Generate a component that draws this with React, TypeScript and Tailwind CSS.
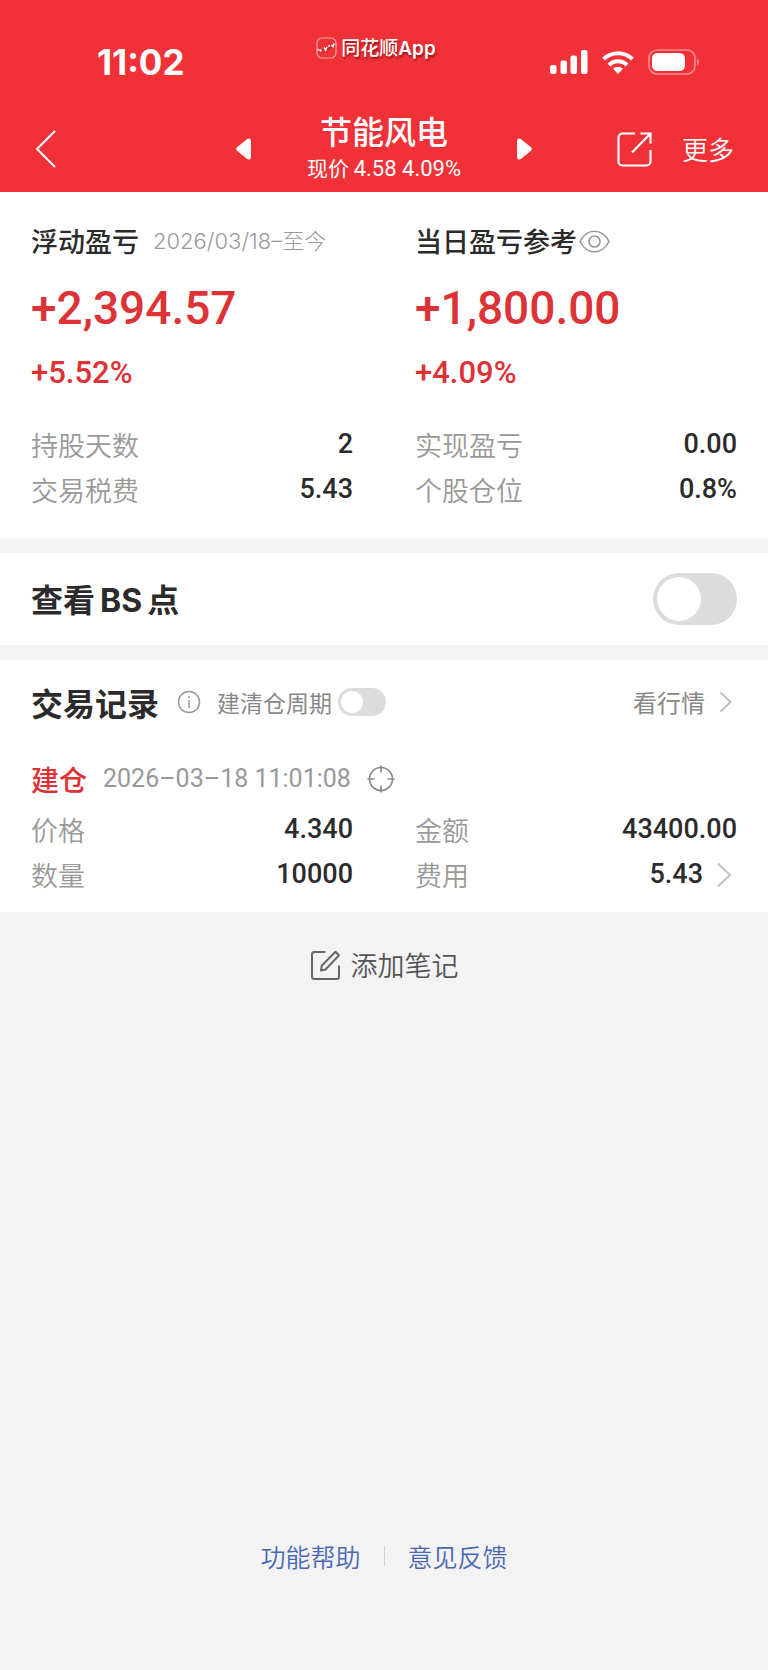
import { useState } from 'react';

const SUMMARY = [
  {
    title: '浮动盈亏',
    note: '2026/03/18–至今',
    amount: '+2,394.57',
    percent: '+5.52%',
    rows: [
      { label: '持股天数', value: '2' },
      { label: '交易税费', value: '5.43' },
    ],
  },
  {
    title: '当日盈亏参考',
    eye: true,
    amount: '+1,800.00',
    percent: '+4.09%',
    rows: [
      { label: '实现盈亏', value: '0.00' },
      { label: '个股仓位', value: '0.8%' },
    ],
  },
];

const TRADE = [
  { label: '价格', value: '4.340' },
  { label: '金额', value: '43400.00' },
  { label: '数量', value: '10000' },
  { label: '费用', value: '5.43', more: true },
];

function AppLogo() {
  return (
    <svg width="21" height="22" viewBox="0 0 21 22" fill="none" aria-hidden="true">
      <rect x="1" y="1" width="19" height="20" rx="5" stroke="#f8a59f" strokeWidth="1.2" />
      <path d="M2 14.500l4-1 3-2.500 3 1.500 3-3.500 4 0" stroke="#b3262a" strokeWidth="1.500" />
      <path d="M1.500 13h2M4 14.500l1.500-2M8 10.500l1.500 2.500 1.500-3M12.500 9.500l1.500-1M15.500 8l1.500 1.500 1-3" stroke="#fff" strokeWidth="1.600" />
    </svg>
  );
}

function StatusIcons() {
  return (
    <div className="flex items-center gap-[14px]">
      <svg width="38" height="24" viewBox="0 0 38 24" fill="#fff" aria-hidden="true">
        <rect x="0" y="15" width="6.500" height="9" rx="2" />
        <rect x="10.500" y="10.500" width="6.500" height="13.500" rx="2" />
        <rect x="20.500" y="5.500" width="6.500" height="18.500" rx="2" />
        <rect x="31" y="0" width="6.500" height="24" rx="2" />
      </svg>
      <svg width="32" height="24" viewBox="0 0 32 24" fill="none" stroke="#fff" strokeWidth="4" aria-hidden="true">
        <path d="M1.500 9.200a20.500 20.500 0 0 1 29 0" />
        <path d="M7 15a12.800 12.800 0 0 1 18 0" />
        <path d="M16 24l-5-5.200a7.200 7.200 0 0 1 10 0z" fill="#fff" stroke="none" />
      </svg>
      <svg width="52" height="26" viewBox="0 0 52 26" fill="none" aria-hidden="true">
        <rect x="1" y="1" width="46" height="24" rx="8" stroke="#f78a8b" strokeWidth="1.600" />
        <rect x="4" y="4" width="33" height="18" rx="5.500" fill="#fff" />
        <path d="M49 9.500c2.600 1 2.600 6 0 7z" fill="#f78a8b" />
      </svg>
    </div>
  );
}

function Chevron({ className }: { className: string }) {
  return (
    <svg viewBox="0 0 14 24" fill="none" className={className} aria-hidden="true">
      <path d="M1.500 1.500L12.500 12L1.500 22.500" stroke="currentColor" strokeWidth="2" />
    </svg>
  );
}

function Row({ label, value, more }: { label: string; value: string; more?: boolean }) {
  return (
    <div className="flex h-[45px] items-center justify-between">
      <dt className="text-[27px] leading-9 font-[350] text-[#999]">{label}</dt>
      <dd className="flex items-center font-[Roboto,sans-serif] text-[27px] font-medium text-[#2b2b2b]">
        {value}
        {more && (
          <button type="button" aria-label="费用明细" className="ml-[13px] mr-[5px] text-[#c4c4c4]">
            <Chevron className="h-[26px] w-4" />
          </button>
        )}
      </dd>
    </div>
  );
}

export default function App() {
  const [showPoints, setShowPoints] = useState(false);
  const [byCycle, setByCycle] = useState(false);

  return (
    <div
      lang="zh-CN"
      className="flex min-h-screen flex-col bg-[#f3f3f3] font-['Noto_Sans_CJK_SC',sans-serif] text-[#2b2b2b]"
    >
      <header className="bg-[#f03238] pb-[6px] text-white">
        {/* Status bar */}
        <div className="grid h-28 grid-cols-[1fr_auto_1fr] items-center pt-3">
          <time className="pl-[97px] font-[Inter,sans-serif] text-[35px] leading-none font-bold">11:02</time>
          <div className="mt-[22px] flex h-7 items-center gap-1 self-start pr-4 text-[19px] leading-7 font-medium [text-shadow:1px_2px_2px_rgba(90,0,0,0.6)]">
            <AppLogo />
            <span>
              同花顺<span className="font-[Inter,sans-serif] font-semibold">App</span>
            </span>
          </div>
          <div className="flex justify-end pr-[68px]">
            <StatusIcons />
          </div>
        </div>

        {/* Title bar */}
        <nav className="grid grid-cols-[1fr_auto_1fr] items-center px-8">
          <div className="flex items-center justify-between">
            <button type="button" aria-label="返回" className="pl-1">
              <svg width="20" height="38" viewBox="0 0 20 38" fill="none" stroke="#fff" strokeWidth="2" aria-hidden="true">
                <path d="M19 1L1 19L19 37" />
              </svg>
            </button>
            <button type="button" aria-label="上一只" className="mr-14">
              <svg width="15" height="22" viewBox="0 0 15 22" fill="#fff" aria-hidden="true">
                <path d="M1 9.300L11.500 .8Q15-.6 15 3v16q0 3.600-3.500 2.200L1 12.700q-1.700-1.700 0-3.400z" />
              </svg>
            </button>
          </div>
          <div className="text-center">
            <h1 className="text-[32px] leading-9 font-medium">节能风电</h1>
            <p className="text-[21px] leading-[38px]">
              现价 <span className="font-[Roboto,sans-serif] text-[22px] leading-none">4.58 4.09%</span>
            </p>
          </div>
          <div className="flex items-center justify-between">
            <button type="button" aria-label="下一只" className="ml-14">
              <svg width="15" height="22" viewBox="0 0 15 22" fill="#fff" aria-hidden="true">
                <path d="M14 9.300L3.500 .8Q0-.6 0 3v16q0 3.600 3.500 2.200L14 12.700q1.700-1.700 0-3.400z" />
              </svg>
            </button>
            <div className="flex items-center gap-[30px]">
              <button type="button" aria-label="分享">
                <svg width="35" height="35" viewBox="0 0 35 35" fill="none" stroke="#fff" strokeWidth="2.200" aria-hidden="true">
                  <path d="M18 1.500H5.500a4 4 0 0 0-4 4v24a4 4 0 0 0 4 4h24a4 4 0 0 0 4-4V18" />
                  <path d="M15 20.500L33 2M23.500 1.500h10v10" />
                </svg>
              </button>
              <button type="button" className="pr-[2px] text-[26px] leading-9 font-[350]">更多</button>
            </div>
          </div>
        </nav>
      </header>

      <main>
        <section className="grid grid-cols-2 gap-x-[62px] bg-white px-[31px] pt-6 pb-[26px]">
          {SUMMARY.map((s) => (
            <div key={s.title}>
              <div className="flex h-[50px] items-center">
                <h2 className="text-[27px] font-medium">{s.title}</h2>
                {s.note && (
                  <span className="ml-[14px] font-[Inter,'Noto_Sans_CJK_SC',sans-serif] text-[22px] font-light text-[#999]">
                    {s.note}
                  </span>
                )}
                {s.eye && (
                  <button type="button" aria-label="隐藏金额" className="ml-[2px]">
                    <svg width="31" height="23" viewBox="0 0 31 23" fill="none" stroke="#999" strokeWidth="1.600" aria-hidden="true">
                      <path d="M1 11.500C8-2.200 23-2.200 30 11.500C23 25.200 8 25.200 1 11.500z" />
                      <circle cx="15.500" cy="11.500" r="5.500" />
                    </svg>
                  </button>
                )}
              </div>
              <div className="font-[Roboto,sans-serif] font-medium text-[#dd3236]">
                <p className="text-[46px] leading-[84px]">{s.amount}</p>
                <p className="text-[31px] leading-[46px]">{s.percent}</p>
              </div>
              <dl className="mt-[26px]">
                {s.rows.map((r) => (
                  <Row key={r.label} {...r} />
                ))}
              </dl>
            </div>
          ))}
        </section>

        <section className="mt-[15px] flex h-[92px] items-center justify-between bg-white px-[31px]">
          <label htmlFor="bs-points" className="text-[32px] font-bold">
            查看<span className="mx-[5px] font-[Inter,sans-serif]">BS</span>点
          </label>
          <input
            id="bs-points"
            type="checkbox"
            role="switch"
            checked={showPoints}
            onChange={(e) => setShowPoints(e.target.checked)}
            className="h-[52px] w-[84px] appearance-none rounded-full bg-[#dcdcdc] p-1 before:block before:size-11 before:rounded-full before:bg-white checked:bg-[#f03238] checked:before:translate-x-8"
          />
        </section>

        <section className="mt-[15px] bg-white px-[31px] pt-[18px] pb-[15px]">
          <div className="flex h-12 items-center">
            <h2 className="text-[32px] font-bold">交易记录</h2>
            <button type="button" aria-label="说明" className="ml-[18px]">
              <svg width="24" height="24" viewBox="0 0 24 24" fill="none" stroke="#999" strokeWidth="1.500" aria-hidden="true">
                <circle cx="12" cy="12" r="10.500" />
                <path d="M12 10v8M12 6v2" />
              </svg>
            </button>
            <label htmlFor="by-cycle" className="ml-4 text-[23px] text-[#888]">建清仓周期</label>
            <input
              id="by-cycle"
              type="checkbox"
              role="switch"
              checked={byCycle}
              onChange={(e) => setByCycle(e.target.checked)}
              className="ml-[6px] h-7 w-12 appearance-none rounded-full bg-[#dcdcdc] p-[3px] before:block before:size-[22px] before:rounded-full before:bg-white checked:bg-[#f03238] checked:before:translate-x-5"
            />
            <a href="#quote" className="ml-auto flex items-center gap-[14px] pr-[5px] text-[24px] text-[#888]">
              看行情
              <Chevron className="h-[22px] w-[13px] text-[#bbb]" />
            </a>
          </div>

          <div className="mt-[29px] flex h-12 items-center">
            <h3 className="text-[28px] font-medium text-[#dd3236]">建仓</h3>
            <time className="ml-4 font-[Roboto,sans-serif] text-[25px] text-[#999]">2026–03–18 11:01:08</time>
            <button type="button" aria-label="定位" className="ml-4">
              <svg width="28" height="28" viewBox="0 0 28 28" fill="none" stroke="#888" strokeWidth="1.600" aria-hidden="true">
                <circle cx="14" cy="14" r="11.500" />
                <path d="M14 .5v7M14 20.500v7M.5 14h7M20.500 14h7" />
              </svg>
            </button>
          </div>

          <dl className="mt-1 grid grid-cols-2 gap-x-[62px]">
            {TRADE.map((r) => (
              <Row key={r.label} {...r} />
            ))}
          </dl>
        </section>

        <button type="button" className="mx-auto mt-[31px] flex h-11 items-center gap-[10px] text-[27px] font-[350] text-[#555]">
          <svg width="31" height="31" viewBox="0 0 31 31" fill="none" stroke="#666" strokeWidth="2" strokeLinejoin="round" aria-hidden="true">
            <path d="M15.500 2H4.500A2.500 2.500 0 0 0 2 4.500v22A2.500 2.500 0 0 0 4.500 29h22a2.500 2.500 0 0 0 2.500-2.500V15.500" />
            <path d="M25.500 1.800l3.500 3.500L15.500 19.500 11 20.500l.7-4.700z" />
          </svg>
          添加笔记
        </button>
      </main>

      <footer className="mt-auto flex items-center justify-center gap-[23px] pb-24 text-[25px] leading-9 font-[350] text-[#4a69b5]">
        <a href="#help">功能帮助</a>
        <span className="h-5 w-px bg-[#d0d0d0]" />
        <a href="#feedback">意见反馈</a>
      </footer>
    </div>
  );
}
